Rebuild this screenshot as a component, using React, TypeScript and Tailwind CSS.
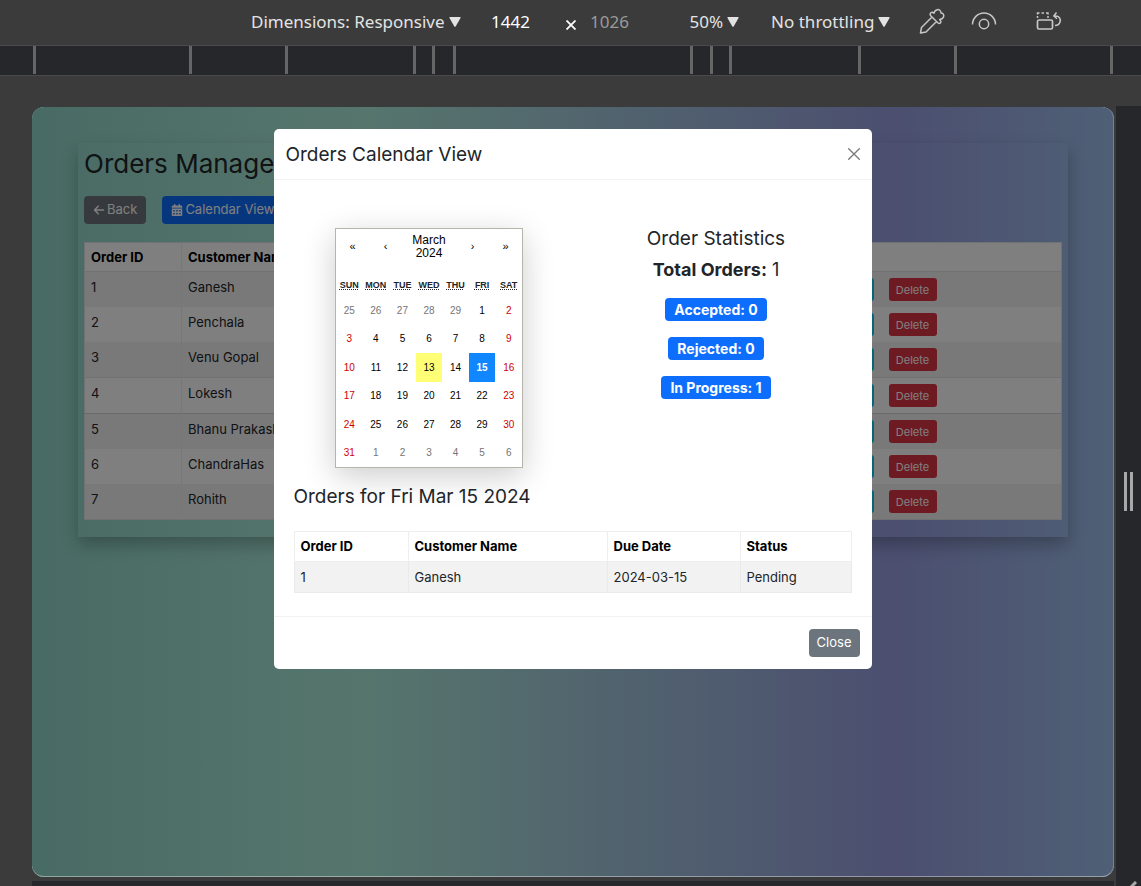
import type { ReactNode } from 'react';
import { FaArrowLeft, FaCalendarDays } from 'react-icons/fa6';

const orders = ['Ganesh', 'Penchala', 'Venu Gopal', 'Lokesh', 'Bhanu Prakash', 'ChandraHas', 'Rohith'];

const weekdays = ['Sun', 'Mon', 'Tue', 'Wed', 'Thu', 'Fri', 'Sat'];

const stats = ['Accepted: 0', 'Rejected: 0', 'In Progress: 1'];

// March 2024 grid: starts on 25 February and runs for six weeks.
const days = Array.from({ length: 42 }, (_, i) => new Date(2024, 1, 25 + i));

function dayClass(date: Date) {
  if (date.getMonth() !== 2) return 'text-[#757575]';
  if (date.getDate() === 13) return 'bg-[#ffff76] text-black';
  if (date.getDate() === 15) return 'bg-[#1087ff] font-bold text-white';
  if (date.getDay() === 0 || date.getDay() === 6) return 'text-[#d10000]';
  return 'text-black';
}

function Triangle() {
  return (
    <svg viewBox="0 0 12 10" className="pointer-events-none h-2.5 w-3 fill-[#e3e3e3]" aria-hidden="true">
      <path d="M1 0h10q1 0 .5 1L6.8 9.3q-.8 1-1.6 0L.5 1Q0 0 1 0z" />
    </svg>
  );
}

function ToolbarSelect({ label, value }: { label: string; value: string }) {
  return (
    <span className="flex items-center gap-1">
      <select aria-label={label} className="field-sizing-content appearance-none bg-transparent text-[#e3e3e3]">
        <option>{value}</option>
      </select>
      <Triangle />
    </span>
  );
}

function ToolbarIcon({ label, children }: { label: string; children: ReactNode }) {
  return (
    <button type="button" aria-label={label} className="text-[#c7c7c7]">
      <svg viewBox="0 0 28 28" className="size-7" fill="none" stroke="currentColor" strokeWidth="1.5" aria-hidden="true">
        {children}
      </svg>
    </button>
  );
}

function Toolbar() {
  return (
    <header className="flex h-[46px] items-center border-b border-[#4a4a4a] pb-0.5 pl-[251px] font-['Noto_Sans',sans-serif] text-[17px] text-[#e3e3e3]">
      <ToolbarSelect label="Device" value="Dimensions: Responsive" />
      <input aria-label="Width" defaultValue="1442" className="ml-[26px] w-12 bg-transparent p-0 text-center text-white" />
      <span className="ml-7 flex w-4 justify-center pt-1.5 text-white">
        <svg viewBox="0 0 10 10" className="size-2.5" stroke="currentColor" strokeWidth="1.800" role="img" aria-label="by">
          <path d="M.5.5l9 9M9.500.5l-9 9" />
        </svg>
      </span>
      <input aria-label="Height" defaultValue="1026" className="ml-[7px] w-12 bg-transparent p-0 text-center text-[#9a9a9a]" />
      <div className="ml-14 flex items-center gap-8">
        <ToolbarSelect label="Zoom" value="50%" />
        <ToolbarSelect label="Throttling" value="No throttling" />
      </div>
      <div className="ml-7 flex items-center">
        <ToolbarIcon label="Pick color">
          <path
            d="M2.500 26l1-5.500L14 10l4.500 4.500L8 25zM12.500 8.500l7.500 7.500c2 1.500 4-1 2.200-2.800l-.5-.7c4-.5 5-4 3.300-5.700-.8-.8-1.500-.8-2-.8 0-2.500-2-3.800-3.800-3.300-1.700.4-2.900 1.800-3.200 3.500l-.7-.4c-1.800-1.300-4.300.8-2.800 2.700z"
            strokeLinejoin="round"
            transform="translate(0 -1)"
          />
        </ToolbarIcon>
        <span className="w-6" />
        <ToolbarIcon label="Vision">
          <path d="M2.500 16.500a11.500 11.500 0 0 1 23 0" />
          <circle cx="14" cy="16" r="4.700" />
        </ToolbarIcon>
        <span className="w-9" />
        <ToolbarIcon label="Rotate">
          <g transform="translate(0 -1)">
            <rect x="3.500" y="13" width="15" height="9" rx="1.500" strokeWidth="1.700" />
            <path d="M3.500 11V9M3.500 7.500V6h2M7.500 6h2.500M12 6h2v1.500M14 9v2" />
            <path d="M20.500 9c5-.5 6.500 3 5.500 6-.6 2-2.500 3.500-5 3.500M22.500 5.500L19.800 9l3.200 2.800" strokeLinejoin="round" />
          </g>
        </ToolbarIcon>
      </div>
    </header>
  );
}

function Ruler() {
  return (
    <div className="border-b border-[#4a4a4a] bg-[#26272b] pr-7 pb-px pl-[33px]">
      <div className="grid h-7 grid-cols-[156fr_96fr_128fr_19fr_21fr_237fr_20fr_19fr_129fr_96fr_156fr] border-r-[3px] border-[#666]">
        {Array.from({ length: 11 }, (_, i) => (
          <span key={i} className="border-l-[3px] border-[#666]" />
        ))}
      </div>
    </div>
  );
}

function OrdersPage() {
  return (
    <main className="px-[46px] pt-9">
      <div className="px-1.5 pt-1.5 pb-[17px] shadow-[0_8px_16px_rgba(0,0,0,0.25)]">
        <h1 className="text-[26px] leading-[30px] text-[#212529]">Orders Management</h1>
        <div className="mt-[17px] flex gap-4 pb-[18px] text-[13px]">
          <button type="button" className="flex h-7 items-center gap-0.5 rounded bg-[#6c757d] px-[9px] text-white">
            <FaArrowLeft className="size-3" />
            Back
          </button>
          <button type="button" className="flex h-7 items-center gap-0.5 rounded bg-[#0d6efd] px-[9px] text-white">
            <FaCalendarDays className="size-3" />
            Calendar View
          </button>
        </div>
        <table className="w-full table-fixed border-collapse border border-[#dee2e6] bg-white text-left text-[13px] leading-[18px] text-[#212529]">
          <colgroup>
            <col className="w-[97px]" />
            <col className="w-[200px]" />
            <col />
            <col />
            <col className="w-[255px]" />
          </colgroup>
          <thead>
            <tr className="border-b border-[#dee2e6] text-black">
              <th className="border-r border-[#eee] px-1.5 py-[5px]">Order ID</th>
              <th className="px-1.5 py-[5px]">Customer Name</th>
              <th className="px-1.5 py-[5px]">Due Date</th>
              <th className="px-1.5 py-[5px]">Status</th>
              <th className="px-1.5 py-[5px]">Actions</th>
            </tr>
          </thead>
          <tbody>
            {orders.map((name, i) => (
              <tr key={name} className="align-top odd:bg-[#f2f2f2] nth-[3]:border-b nth-[3]:border-[#dee2e6] nth-[4]:border-b nth-[4]:border-[#d0d4d8]">
                <td className="border-r border-[#eee] px-1.5 py-1.5">{i + 1}</td>
                <td className="px-1.5 py-1.5">{name}</td>
                <td />
                <td />
                <td className="px-1.5 py-1.5">
                  <div className="flex gap-[15px] text-[11px]">
                    <button type="button" className="h-[23px] w-[61px] rounded-[3px] bg-[#0dcaf0] text-black">Update</button>
                    <button type="button" className="h-[23px] w-12 rounded-[3px] bg-[#dc3545] text-white">Delete</button>
                  </div>
                </td>
              </tr>
            ))}
          </tbody>
        </table>
      </div>
    </main>
  );
}

function Calendar() {
  return (
    <section aria-label="Calendar" className="w-[188px] border border-[#b5b5ac] bg-white font-['Liberation_Sans',Arial,sans-serif] text-[10px] text-black shadow-[0_8px_30px_rgba(0,0,0,0.2)]">
      <div className="flex h-[35px] items-stretch text-[11px]">
        <button type="button" aria-label="Previous year" className="w-[33px]">«</button>
        <button type="button" aria-label="Previous month" className="w-[33px]">‹</button>
        <button type="button" className="flex-1 text-[12px] leading-[13px]">March 2024</button>
        <button type="button" aria-label="Next month" className="w-[33px]">›</button>
        <button type="button" aria-label="Next year" className="w-[33px]">»</button>
      </div>
      <div className="mt-3 grid h-5 grid-cols-7 items-center text-center text-[9px] font-bold text-[#212529] uppercase">
        {weekdays.map((day) => (
          <abbr key={day} title={day} className="underline decoration-dotted">{day}</abbr>
        ))}
      </div>
      <div className="grid h-[171px] grid-cols-7 grid-rows-6">
        {days.map((date) => (
          <button key={date.toISOString()} type="button" className={dayClass(date)}>
            {date.getDate()}
          </button>
        ))}
      </div>
    </section>
  );
}

function OrdersDialog() {
  return (
    <div role="dialog" aria-labelledby="dialog-title" className="w-full max-w-[598px] rounded-[5px] bg-white text-[#212529]">
      <div className="flex h-[51px] items-center justify-between border-b border-[#f1f2f3] px-3">
        <h2 id="dialog-title" className="pt-0.5 text-[19px]">Orders Calendar View</h2>
        <button type="button" aria-label="Close dialog" className="text-[#777]">
          <svg viewBox="0 0 12 12" className="size-3" stroke="currentColor" strokeWidth="1.300" strokeLinecap="round" aria-hidden="true">
            <path d="M.7.7l10.600 10.600M11.300.7L.7 11.300" />
          </svg>
        </button>
      </div>
      <div className="px-3 pt-12 pb-[23px]">
        <div className="grid grid-cols-2">
          <div className="flex justify-center">
            <Calendar />
          </div>
          <div className="flex flex-col items-center">
            <h3 className="text-[19px] leading-[22px]">Order Statistics</h3>
            <p className="mt-[9px] text-[18px] leading-[22px]">
              <strong>Total Orders:</strong> 1
            </p>
            <ul className="mt-[17px] flex flex-col items-center gap-4">
              {stats.map((stat) => (
                <li key={stat} className="flex h-[23px] items-center rounded bg-[#0d6efd] px-[9px] text-[14px] font-bold text-white">
                  {stat}
                </li>
              ))}
            </ul>
          </div>
        </div>
        <div className="px-2">
          <h3 className="mt-[18px] text-[19px] leading-[22px]">Orders for Fri Mar 15 2024</h3>
          <table className="mt-[23px] w-full table-fixed border-collapse text-left text-[13px]">
            <colgroup>
              <col className="w-[114px]" />
              <col className="w-[199px]" />
              <col className="w-[133px]" />
              <col />
            </colgroup>
            <thead>
              <tr className="leading-[17px] text-black">
                {['Order ID', 'Customer Name', 'Due Date', 'Status'].map((title) => (
                  <th key={title} className="border border-[#eee] px-1.5 py-1.5">{title}</th>
                ))}
              </tr>
            </thead>
            <tbody>
              <tr className="bg-[#f2f2f2] leading-[18px]">
                {['1', 'Ganesh', '2024-03-15', 'Pending'].map((value) => (
                  <td key={value} className="border border-[#eaeaea] px-1.5 py-1.5">{value}</td>
                ))}
              </tr>
            </tbody>
          </table>
        </div>
      </div>
      <div className="flex justify-end border-t border-[#f1f2f3] p-3">
        <button type="button" className="h-7 rounded bg-[#6c757d] px-2 text-[13px] text-white">Close</button>
      </div>
    </div>
  );
}

export default function App() {
  return (
    <div className="flex min-h-screen flex-col bg-[#3b3b3b]">
      <Toolbar />
      <Ruler />
      <div className="flex flex-1 gap-0.5 pt-[30px] pl-8">
        <div className="flex flex-1 flex-col gap-1 pt-px">
          <div className="relative flex-1 overflow-hidden rounded-xl bg-[linear-gradient(90deg,#92d6ca_0%,#acecda_30.300%,#989ee0_79.800%,#9ec0ec_100%)] font-[Inter,sans-serif]">
            <OrdersPage />
            <div className="absolute inset-0 flex items-start justify-center rounded-xl border-r border-b border-r-white/20 border-b-white/40 bg-black/50 pt-[22px]">
              <OrdersDialog />
            </div>
          </div>
          <div className="h-[5px] bg-[#26272b]" />
        </div>
        <div className="relative flex w-[25px] items-center justify-center gap-[3px] bg-[#26272b] pb-2.5">
          <span className="h-[39px] w-[3px] bg-[#a8a8a8]" />
          <span className="h-[39px] w-[3px] bg-[#a8a8a8]" />
          <svg viewBox="0 0 12 5" className="absolute right-0 bottom-0 h-[5px] w-3" stroke="#a8a8a8" strokeWidth="3" aria-hidden="true">
            <path d="M2 6l5-5" />
          </svg>
        </div>
      </div>
    </div>
  );
}
